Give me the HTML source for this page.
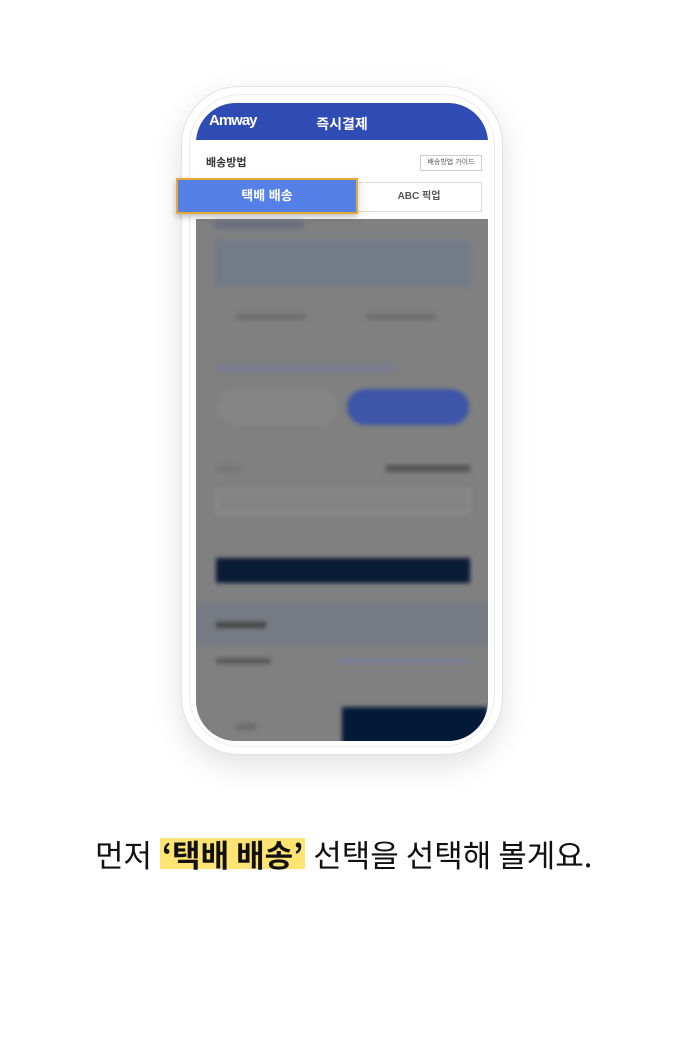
<!DOCTYPE html><html><head><meta charset="utf-8"><style>
*{margin:0;padding:0;box-sizing:border-box}
body{width:684px;height:1047px;background:#fff;position:relative;overflow:hidden;font-family:"Liberation Sans","Noto Sans CJK KR",sans-serif}
.a{position:absolute}
.phone{left:181px;top:86px;width:322px;height:669px;border-radius:58px;background:#fff;border:1px solid #e2e2e2;box-shadow:0 10px 30px rgba(0,0,0,.12)}
.inner{left:189px;top:94px;width:306px;height:653px;border-radius:52px;border:1px solid #ececec}
.screen{left:196px;top:103px;width:292px;height:638px;border-radius:40px;overflow:hidden;background:#808080}
.bl{filter:blur(2px)}
</style></head><body>
<div class="a phone"></div><div class="a inner"></div>
<div class="a screen">
 <div class="a" style="left:0;top:0;width:292px;height:37px;background:#2f4bb4"></div>
 <div class="a" style="left:13px;top:9px;color:#fff;font-weight:bold;font-size:15px;letter-spacing:-1px">Amway</div>
 <div class="a" style="left:0;top:11px;width:292px;text-align:center;color:#fff;font-weight:bold;font-size:14px">즉시결제</div>
 <div class="a" style="left:0;top:37px;width:292px;height:79px;background:#fff"></div>
 <div class="a" style="left:10px;top:51px;font-size:11px;font-weight:bold;color:#333">배송방법</div>
 <div class="a" style="left:224px;top:52px;width:62px;height:16px;border:1px solid #ccc;font-size:7px;color:#555;text-align:center;line-height:14px">배송방법 가이드</div>
 <div class="a" style="left:10px;top:79px;width:276px;height:30px;border:1px solid #ddd"></div>
 <div class="a" style="left:160px;top:79px;width:126px;height:30px;line-height:30px;text-align:center;font-size:10px;font-weight:bold;color:#555">ABC 픽업</div>
 <div class="bl">
 <div class="a" style="left:18px;top:118px;width:90px;height:8px;background:#6a7080;border-radius:4px"></div>
 <div class="a" style="left:18px;top:137px;width:256px;height:47px;background:#747b88"></div>
 <div class="a" style="left:40px;top:211px;width:70px;height:6px;background:#6e6e6e"></div>
 <div class="a" style="left:170px;top:211px;width:70px;height:6px;background:#6e6e6e"></div>
 <div class="a" style="left:20px;top:262px;width:180px;height:7px;background:#7a7d95"></div>
 <div class="a" style="left:22px;top:286px;width:120px;height:36px;border-radius:18px;background:#858585"></div>
 <div class="a" style="left:151px;top:286px;width:122px;height:36px;border-radius:18px;background:#3e55a8"></div>
 <div class="a" style="left:20px;top:363px;width:25px;height:6px;background:#757575"></div>
 <div class="a" style="left:190px;top:362px;width:84px;height:7px;background:#555"></div>
 <div class="a" style="left:20px;top:386px;width:254px;height:25px;border:1px solid #999;background:#838383"></div>
 <div class="a" style="left:20px;top:455px;width:254px;height:25px;background:#0a1b35"></div>
 <div class="a" style="left:0;top:500px;width:292px;height:42px;background:#767a83"></div>
 <div class="a" style="left:20px;top:519px;width:50px;height:6px;background:#444"></div>
 <div class="a" style="left:20px;top:555px;width:55px;height:6px;background:#5a5a5a"></div>
 <div class="a" style="left:140px;top:556px;width:132px;height:4px;background:#7a7ea0"></div>
 <div class="a" style="left:40px;top:621px;width:20px;height:6px;background:#6a6a6a"></div>
 <div class="a" style="left:146px;top:604px;width:146px;height:40px;background:#021a38"></div>
 </div>
</div>
<div class="a" style="left:176px;top:178px;width:182px;height:36px;background:#5580e8;border:2px solid #e3a835;box-shadow:0 3px 6px rgba(0,0,0,.25);color:#fff;font-weight:bold;font-size:13px;text-align:center;line-height:32px">택배 배송</div>
<div class="a" style="left:160px;top:838px;width:145px;height:31px;background:#ffe373"></div>
<div class="a" style="left:95px;top:832px;font-size:31px;color:#111;white-space:nowrap;font-family:'Noto Sans CJK KR',sans-serif;line-height:44px">먼저 <b style="padding:0 3px">‘택배 배송’</b> 선택을 선택해 볼게요.</div>
</body></html>
